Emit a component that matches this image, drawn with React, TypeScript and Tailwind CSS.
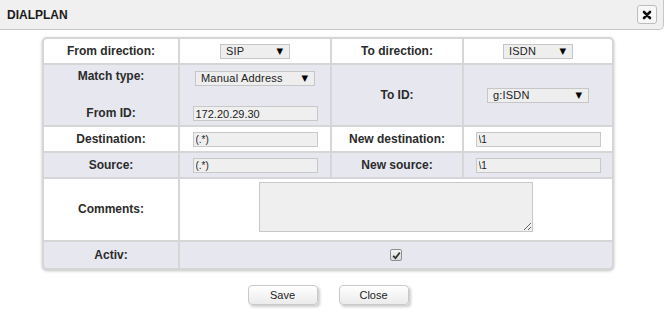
import React from "react"

const rowGray = "bg-[#e6e7ef]"

const Label = ({ children }: { children: React.ReactNode }) => (
  <div className="flex items-center justify-center text-[12px] font-bold text-[#2b2b2b] leading-[15px]">
    {children}
  </div>
)

const FakeSelect = ({ value, width }: { value: string; width: string }) => (
  <div
    className={`${width} h-[15px] flex items-center justify-between pl-[5px] pr-[6px] bg-[#eeeeee] border border-[#c6c6c6] text-[11px] text-[#222] leading-none`}
  >
    <span className="tracking-[0.2px]">{value}</span>
    <span className="text-[8.5px] text-black font-['DejaVu_Sans',sans-serif]">▼</span>
  </div>
)

const TextInput = ({ value, width, small }: { value: string; width: string; small?: boolean }) => (
  <input
    readOnly
    defaultValue={value}
    className={`${width} h-[15px] px-[2px] bg-[#efefef] border border-[#c8c8c8] ${small ? "text-[10px]" : "text-[11px]"} text-[#222] leading-none outline-none`}
    style={{ fontFamily: "'Liberation Sans', Arial, sans-serif" }}
  />
)

const Cell = ({ className = "", children }: { className?: string; children?: React.ReactNode }) => (
  <div className={`flex items-center justify-center ${className}`}>{children}</div>
)

export default function App() {
  return (
    <div className="w-[665px] h-[313px] bg-white overflow-hidden font-['Liberation_Sans',Arial,sans-serif]">
      <div className="w-[664px] h-[30px] flex items-center justify-between pl-[7px] pr-[6px] bg-[#f0f0f0] border-b border-r border-[#c6c6c6] rounded-br-[5px]">
        <span className="text-[12px] font-bold text-[#1a1a1a]">DIALPLAN</span>
        <button className="w-[20px] h-[19px] flex items-center justify-center bg-[#f7f7f7] border border-[#bdbdbd] rounded-[3px]">
          <svg width="10" height="10" viewBox="0 0 10 10">
            <path d="M2 2 L8 8 M8 2 L2 8" stroke="#111" strokeWidth="2.6" strokeLinecap="round" />
          </svg>
        </button>
      </div>

      <div className="ml-[42px] mt-[7px] w-[572px] border-2 border-[#d6d6d6] rounded-[5px] overflow-hidden bg-[#d6d6d6] shadow-[0_1px_3px_rgba(0,0,0,0.25)]">
        <div className="grid grid-cols-[134px_150px_130px_148px] grid-rows-[24px_60px_24px_24px_61px_26px] gap-[2px]">
          {/* row 1 */}
          <Cell className="bg-white"><Label>From direction:</Label></Cell>
          <Cell className="bg-white"><FakeSelect value="SIP" width="w-[70px]" /></Cell>
          <Cell className="bg-white"><Label>To direction:</Label></Cell>
          <Cell className="bg-white"><FakeSelect value="ISDN" width="w-[70px]" /></Cell>

          {/* row 2 */}
          <div className={`${rowGray} flex flex-col justify-between items-center pt-[4px] pb-[4px]`}>
            <Label>Match type:</Label>
            <Label>From ID:</Label>
          </div>
          <div className={`${rowGray} flex flex-col justify-between items-center pt-[6px] pb-[4px]`}>
            <FakeSelect value="Manual Address" width="w-[120px]" />
            <TextInput value="172.20.29.30" width="w-[125px]" />
          </div>
          <Cell className={rowGray}><Label>To ID:</Label></Cell>
          <Cell className={rowGray}><FakeSelect value="g:ISDN" width="w-[102px]" /></Cell>

          {/* row 3 */}
          <Cell className="bg-white"><Label>Destination:</Label></Cell>
          <Cell className="bg-white"><TextInput value="(.*)" width="w-[125px]" small /></Cell>
          <Cell className="bg-white"><Label>New destination:</Label></Cell>
          <Cell className="bg-white"><TextInput value="\1" width="w-[125px]" small /></Cell>

          {/* row 4 */}
          <Cell className={rowGray}><Label>Source:</Label></Cell>
          <Cell className={rowGray}><TextInput value="(.*)" width="w-[125px]" small /></Cell>
          <Cell className={rowGray}><Label>New source:</Label></Cell>
          <Cell className={rowGray}><TextInput value="\1" width="w-[125px]" small /></Cell>

          {/* row 5 */}
          <Cell className="bg-white"><Label>Comments:</Label></Cell>
          <div className="col-span-3 bg-white flex justify-center items-start pt-[3px]">
            <textarea
              readOnly
              className="w-[274px] h-[50px] bg-[#efefef] border border-[#c8c8c8] outline-none"
            />
          </div>

          {/* row 6 */}
          <Cell className={rowGray}><Label>Activ:</Label></Cell>
          <Cell className={`col-span-3 ${rowGray}`}>
            <span className="w-[12px] h-[12px] flex items-center justify-center rounded-[2px] border border-[#8f8f8f] bg-gradient-to-b from-[#f4f4f4] to-[#d9d9d9]">
              <svg width="9" height="9" viewBox="0 0 9 9">
                <path d="M1.2 4.8 L3.5 7.2 L7.8 1.5" stroke="#333" strokeWidth="1.8" fill="none" />
              </svg>
            </span>
          </Cell>
        </div>
      </div>

      <div className="ml-[42px] w-[572px] mt-[15px] flex justify-center gap-[21px]">
        <button className="w-[70px] h-[20px] text-[11px] text-[#222] rounded-[4px] border border-[#c9c9c9] bg-gradient-to-b from-white to-[#ebebeb] shadow-[2px_2px_3px_rgba(0,0,0,0.2)]">
          Save
        </button>
        <button className="w-[70px] h-[20px] text-[11px] text-[#222] rounded-[4px] border border-[#c9c9c9] bg-gradient-to-b from-white to-[#ebebeb] shadow-[2px_2px_3px_rgba(0,0,0,0.2)]">
          Close
        </button>
      </div>
    </div>
  )
}
